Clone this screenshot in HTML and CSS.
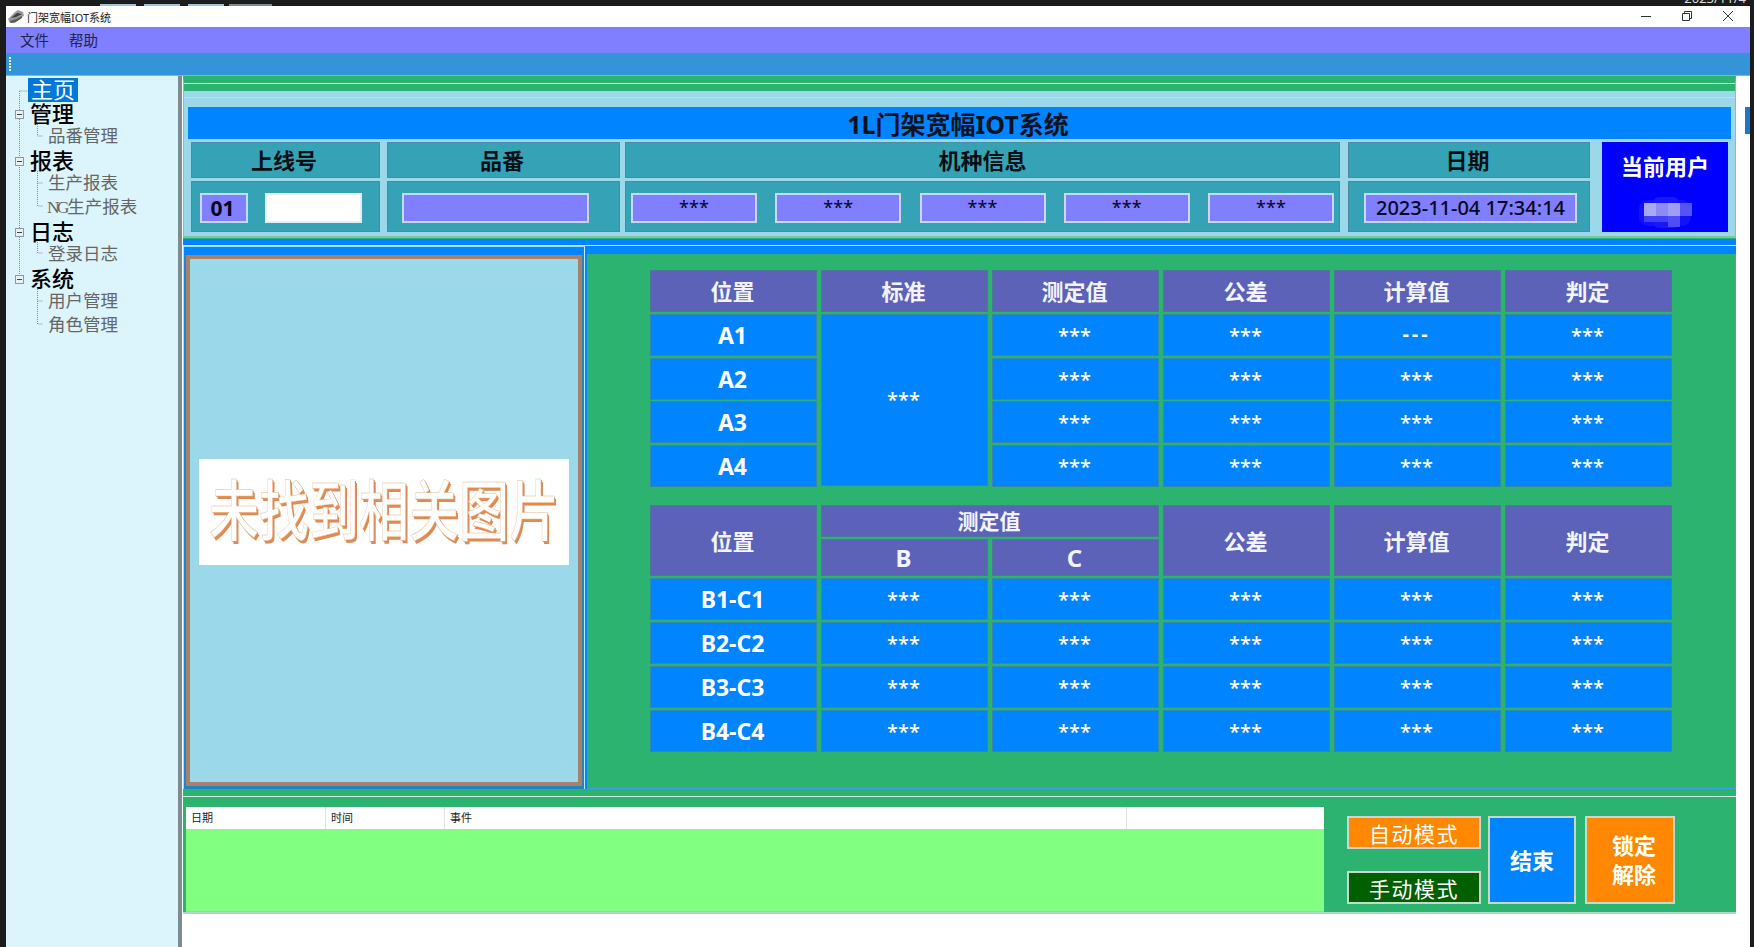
FILE: index.html
```html
<!DOCTYPE html>
<html lang="zh-CN">
<head>
  <meta charset="UTF-8">
  <title>门架宽幅IOT系统</title>
  <link rel="stylesheet" href="styles.css">
</head>
<body>
  <div class="taskbar">
    <span class="task-tab"></span>
    <span class="task-tab"></span>
    <span class="task-tab"></span>
    <span class="task-tab task-tab-active"></span>
    <span class="task-date">2023/11/4</span>
  </div>

  <div class="window">
    <div class="titlebar">
      <svg class="app-icon" width="16" height="14" viewBox="0 0 16 14">
        <path d="M0 9 L7 2 L10 0 L15 2 L16 6 L9 9 L7 13 L2 13 Z" fill="#9a9a9a"/>
        <path d="M3 8 L9 3 L14 4 L8 7 Z" fill="#3f3f3f"/>
        <path d="M2 11 L8 9 L14 6 L14 8 L8 12 L3 13 Z" fill="#5c5c5c"/>
      </svg>
      <span class="app-title">门架宽幅IOT系统</span>
      <div class="win-controls">
        <svg width="12" height="12" viewBox="0 0 12 12"><path d="M1 6.5 H11" stroke="#333" fill="none"/></svg>
        <svg width="12" height="12" viewBox="0 0 12 12"><path d="M1.5 3.5 H8.5 V10.5 H1.5 Z M3.5 3.5 V1.5 H10.5 V8.5 H8.5" stroke="#333" fill="none"/></svg>
        <svg width="12" height="12" viewBox="0 0 12 12"><path d="M1 1 L11 11 M11 1 L1 11" stroke="#333" fill="none"/></svg>
      </div>
    </div>

    <div class="menubar">
      <span>文件</span>
      <span>帮助</span>
    </div>

    <div class="toolbar"><span class="grip"></span></div>

    <div class="content">
      <aside class="sidebar">
        <svg class="tree-lines" width="60" height="340" viewBox="0 0 60 340">
          <g stroke="#888" stroke-dasharray="1 1" fill="none">
            <path d="M13.5 15 V204 M13.5 15 H22"/>
            <path d="M31.5 48 V60 H37"/>
            <path d="M31.5 95 V130 H37 M31.5 107 H37"/>
            <path d="M31.5 166 V177 H37"/>
            <path d="M31.5 213 V248 H37 M31.5 225 H37"/>
          </g>
          <g fill="#e8f2f5" stroke="#8a9aa0">
            <rect x="9.5" y="34.5" width="8" height="8"/>
            <rect x="9.5" y="81.5" width="8" height="8"/>
            <rect x="9.5" y="152.5" width="8" height="8"/>
            <rect x="9.5" y="199.5" width="8" height="8"/>
          </g>
          <g stroke="#444" fill="none">
            <path d="M11 38.5 H16 M11 85.5 H16 M11 156.5 H16 M11 203.5 H16"/>
          </g>
        </svg>
        <ul class="tree">
          <li class="node"><span class="node-selected">主页</span></li>
          <li class="node">管理</li>
          <li class="leaf">品番管理</li>
          <li class="node">报表</li>
          <li class="leaf">生产报表</li>
          <li class="leaf"><span class="leaf-latin">NG</span>生产报表</li>
          <li class="node">日志</li>
          <li class="leaf">登录日志</li>
          <li class="node">系统</li>
          <li class="leaf">用户管理</li>
          <li class="leaf">角色管理</li>
        </ul>
      </aside>
      <div class="splitter"></div>

      <main class="main">
        <div class="main-inner">
          <section class="info-panel">
            <div class="info-title">1L门架宽幅IOT系统</div>
            <div class="info-row">
              <div class="info-col col-line">
                <div class="info-head">上线号</div>
                <div class="info-body">
                  <span class="field field-line">01</span>
                  <span class="field field-white"></span>
                </div>
              </div>
              <div class="info-col col-part">
                <div class="info-head">品番</div>
                <div class="info-body body-center">
                  <span class="field field-part"></span>
                </div>
              </div>
              <div class="info-col col-model">
                <div class="info-head">机种信息</div>
                <div class="info-body body-model">
                  <span class="field field-model">***</span>
                  <span class="field field-model">***</span>
                  <span class="field field-model">***</span>
                  <span class="field field-model">***</span>
                  <span class="field field-model">***</span>
                </div>
              </div>
              <div class="info-col col-date">
                <div class="info-head">日期</div>
                <div class="info-body body-center">
                  <span class="field field-date">2023-11-04 17:34:14</span>
                </div>
              </div>
              <div class="user-box">
                <div class="user-label">当前用户</div>
                <svg class="user-blur" width="60" height="32" viewBox="0 0 60 32">
                  <rect x="6" y="3" width="52" height="26" rx="9" fill="#1212f8"/>
                  <rect x="20" y="0" width="26" height="31" rx="6" fill="#1818f7"/>
                  <rect x="11" y="6" width="12" height="13" fill="#aaa8f0"/>
                  <rect x="23" y="6" width="12" height="13" fill="#8d8bf0"/>
                  <rect x="35" y="6" width="12" height="13" fill="#a09ef2"/>
                  <rect x="47" y="6" width="12" height="13" fill="#5553f5"/>
                  <rect x="11" y="19" width="24" height="6" fill="#4040f6"/>
                  <rect x="35" y="19" width="12" height="11" fill="#4f4df5"/>
                </svg>
              </div>
            </div>
          </section>

          <section class="middle">
            <div class="photo-panel">
              <div class="photo-frame">
                <div class="no-image"><span class="no-image-text">未找到相关图片</span></div>
              </div>
            </div>
            <div class="data-panel">
              <div class="data-grid grid-a">
                <div class="cell cell-head">位置</div>
                <div class="cell cell-head">标准</div>
                <div class="cell cell-head">测定值</div>
                <div class="cell cell-head">公差</div>
                <div class="cell cell-head">计算值</div>
                <div class="cell cell-head">判定</div>

                <div class="cell cell-name">A1</div>
                <div class="cell cell-std">***</div>
                <div class="cell">***</div>
                <div class="cell">***</div>
                <div class="cell cell-dash">---</div>
                <div class="cell">***</div>

                <div class="cell cell-name">A2</div>
                <div class="cell">***</div>
                <div class="cell">***</div>
                <div class="cell">***</div>
                <div class="cell">***</div>

                <div class="cell cell-name">A3</div>
                <div class="cell">***</div>
                <div class="cell">***</div>
                <div class="cell">***</div>
                <div class="cell">***</div>

                <div class="cell cell-name">A4</div>
                <div class="cell">***</div>
                <div class="cell">***</div>
                <div class="cell">***</div>
                <div class="cell">***</div>
              </div>

              <div class="data-grid grid-b">
                <div class="cell cell-head span-rows">位置</div>
                <div class="cell cell-head span-cols head-small">测定值</div>
                <div class="cell cell-head span-rows">公差</div>
                <div class="cell cell-head span-rows">计算值</div>
                <div class="cell cell-head span-rows">判定</div>
                <div class="cell cell-head head-letter">B</div>
                <div class="cell cell-head head-letter">C</div>

                <div class="cell cell-name">B1-C1</div>
                <div class="cell">***</div>
                <div class="cell">***</div>
                <div class="cell">***</div>
                <div class="cell">***</div>
                <div class="cell">***</div>

                <div class="cell cell-name">B2-C2</div>
                <div class="cell">***</div>
                <div class="cell">***</div>
                <div class="cell">***</div>
                <div class="cell">***</div>
                <div class="cell">***</div>

                <div class="cell cell-name">B3-C3</div>
                <div class="cell">***</div>
                <div class="cell">***</div>
                <div class="cell">***</div>
                <div class="cell">***</div>
                <div class="cell">***</div>

                <div class="cell cell-name">B4-C4</div>
                <div class="cell">***</div>
                <div class="cell">***</div>
                <div class="cell">***</div>
                <div class="cell">***</div>
                <div class="cell">***</div>
              </div>
            </div>
          </section>

          <section class="bottom">
            <div class="log-table">
              <div class="log-head">
                <span class="log-date">日期</span>
                <span class="log-time">时间</span>
                <span class="log-event">事件</span>
                <span class="log-extra"></span>
              </div>
              <div class="log-body"></div>
            </div>
            <div class="mode-buttons">
              <button class="btn btn-auto">自动模式</button>
              <button class="btn btn-manual">手动模式</button>
            </div>
            <button class="btn btn-end">结束</button>
            <button class="btn btn-unlock">锁定<br>解除</button>
          </section>
        </div>
        <div class="side-tab"></div>
      </main>
    </div>
  </div>
</body>
</html>
```

FILE: styles.css
```css
html, body {
  margin: 0;
  height: 947px;
  overflow: hidden;
  background: #1c1c1c;
  font-family: "Noto Sans", "Noto Sans CJK SC", sans-serif;
}

.taskbar {
  height: 6px;
  display: flex;
  align-items: flex-end;
  padding-left: 100px;
  gap: 8px;
  overflow: hidden;
  position: relative;
}

.task-tab {
  width: 36px;
  height: 2px;
  background: #9fc4dc;
}

.task-tab-active {
  width: 43px;
  margin-left: -3px;
  background: #7d8a94;
}

.task-date {
  position: absolute;
  right: 8px;
  top: -11px;
  font-size: 13px;
  color: #ddd;
}

.window {
  margin-left: 6px;
  width: 1744px;
  height: 941px;
  background: #fff;
  display: flex;
  flex-direction: column;
}

.titlebar {
  height: 21px;
  display: flex;
  align-items: center;
  padding-left: 2px;
  background: #fff;
}

.app-icon {
  margin-right: 3px;
}

.app-title {
  font-size: 11px;
  color: #222;
}

.win-controls {
  margin-left: auto;
  display: flex;
  gap: 29px;
  padding-right: 16px;
  padding-bottom: 2px;
}

.win-controls svg {
  display: block;
}

.menubar {
  height: 26px;
  box-sizing: border-box;
  padding-bottom: 2px;
  background: #7f7fff;
  display: flex;
  align-items: center;
  gap: 20px;
  padding-left: 14px;
  font-size: 14.5px;
  color: #22224a;
}

.toolbar {
  height: 22px;
  background: #3494d8;
  border-bottom: 1px solid #7ab6dc;
  display: flex;
  align-items: center;
  padding-left: 3px;
}

.grip {
  width: 2px;
  height: 14px;
  background: repeating-linear-gradient(to bottom, #e8f4fb 0 2px, transparent 2px 3px);
}

.content {
  flex: 1;
  display: flex;
  min-height: 0;
}

/* left tree */
.sidebar {
  width: 172px;
  background: #dcf4fb;
  position: relative;
  padding-top: 2px;
}

.tree-lines {
  position: absolute;
  left: 0;
  top: 0;
}

.tree {
  list-style: none;
  margin: 0;
  padding: 0;
  position: relative;
}

.tree li {
  height: 23.6px;
  line-height: 23.6px;
  white-space: nowrap;
}

.node {
  padding-left: 24px;
  font-size: 22px;
  font-weight: 500;
  color: #000;
}

.node-selected {
  display: inline-block;
  vertical-align: top;
  background: #0078d7;
  color: #fff;
  font-weight: 400;
  height: 23.6px;
  padding: 0 3px;
  margin-left: -2px;
}

.leaf {
  padding-left: 42px;
  font-family: "Liberation Serif", "Noto Sans CJK SC", serif;
  font-size: 17.5px;
  color: #666;
}

.leaf-latin {
  letter-spacing: -3px;
  margin-right: 1px;
  margin-left: -1px;
}

.splitter {
  width: 4px;
  background: #7d8b92;
}

.main {
  flex: 1;
  display: flex;
  background: #fff;
  position: relative;
}

.main-inner {
  width: 1553px;
  margin-left: 1px;
  display: flex;
  flex-direction: column;
}

.side-tab {
  position: absolute;
  left: 1563px;
  top: 31px;
  width: 5px;
  height: 27px;
  background: #1976c8;
}

/* top info panel */
.info-panel {
  height: 162px;
  box-sizing: border-box;
  background: linear-gradient(to bottom, #2db370 0 8px, #9bd8e9 8px 14px, #b4e4f0 14px 15px, #9bd8e9 15px);
  border-top: 7px solid #2db370;
  border-left: 1px solid #7cc9a0;
  border-right: 1px solid #7cc9a0;
  border-bottom: 2px solid #7cc9a0;
  box-shadow: inset 0 1px 0 #cfeee0;
  padding: 24px 4px 0;
}

.info-title {
  height: 32px;
  background: #0084ff;
  text-align: center;
  font-size: 25px;
  font-weight: 700;
  line-height: 35px;
  padding-right: 3px;
  color: #0b1220;
}

.info-row {
  display: flex;
  margin-top: 3px;
  padding-left: 3px;
}

.info-col {
  display: flex;
  flex-direction: column;
  gap: 3px;
}

.col-line { width: 189px; }
.col-part { width: 233px; margin-left: 7px; }
.col-model { width: 715px; margin-left: 5px; }
.col-date { width: 242px; margin-left: 8px; }

.info-head {
  height: 36px;
  box-sizing: border-box;
  background: #35a3b5;
  border: 1px solid #4c8b99;
  text-align: center;
  font-size: 22px;
  font-weight: 700;
  line-height: 34px;
  color: #061014;
}

.col-line .info-head, .col-part .info-head, .col-date .info-head {
  padding-right: 3px;
}

.info-body {
  height: 51px;
  box-sizing: border-box;
  background: #35a3b5;
  border: 1px solid #4c8b99;
  padding-top: 3px;
  display: flex;
  align-items: center;
}

.body-center {
  justify-content: center;
}

.field {
  box-sizing: border-box;
  height: 30px;
  background: #7f7fff;
  border: 2px solid #c9d8f2;
  text-align: center;
  color: #08081c;
}

.field-line {
  width: 48px;
  margin-left: 8px;
  font-size: 21px;
  font-weight: 700;
  line-height: 26px;
  padding-right: 3px;
}

.field-white {
  width: 97px;
  margin-left: 17px;
  background: #fff;
  border-color: #e4eef2;
}

.field-part {
  width: 187px;
  margin-right: 16px;
}

.body-model {
  justify-content: space-between;
  padding-left: 5px;
  padding-right: 5px;
}

.field-model {
  width: 126px;
  font-size: 18px;
  line-height: 24px;
}

.field-date {
  width: 213px;
  margin-left: 3px;
  font-size: 20px;
  font-weight: 500;
  line-height: 26px;
}

.user-box {
  width: 126px;
  height: 90px;
  margin-left: 12px;
  background: #0000ff;
  color: #fff;
  text-align: center;
}

.user-label {
  font-size: 22px;
  font-weight: 700;
  line-height: 28px;
  padding-top: 10px;
}

.user-blur {
  display: block;
  margin: 17px 0 0 31px;
}

/* middle row */
.middle {
  height: 551px;
  display: flex;
  background: linear-gradient(to bottom, #0084ff 0 6px, #b8ecfa 6px 7px, #0084ff 7px);
  border-top: 1px solid #2db370;
  box-sizing: border-box;
}

.photo-panel {
  width: 402px;
  box-sizing: border-box;
  margin-top: 7px;
  padding: 8px 2px 3px 2px;
  border-left: 1px solid #9fe0f5;
  border-top: 1px solid #9fe0f5;
  border-right: 1px solid #b8ecfa;
  background: linear-gradient(to bottom, #0084ff 0 8px, #1f86c4 8px);
  display: flex;
}

.photo-frame {
  flex: 1;
  box-sizing: border-box;
  background: #9bd8e9;
  border: 4px solid #a9806a;
  display: flex;
  align-items: center;
  padding: 0 9px;
}

.no-image {
  flex: 1;
  height: 106px;
  margin-bottom: 18px;
  background: #fff;
  text-align: center;
  font-size: 50px;
  line-height: 102px;
  white-space: nowrap;
}

.no-image-text {
  display: inline-block;
  transform: scaleY(1.32);
  font-weight: 500;
  color: #fff;
  -webkit-text-stroke: 0.3px #e9b58f;
  text-shadow: 1px 1px 0 #e18a52, 2px 2px 0 #e18a52;
}

.data-panel {
  flex: 1;
  margin-top: 15px;
  margin-left: 2px;
  background: #2db370;
  border-right: 1px solid #3aa0e8;
  border-bottom: 1px solid #3aa0e8;
  box-sizing: border-box;
  padding: 16px 0 0 63px;
}

.data-grid {
  display: grid;
  grid-template-columns: repeat(6, 167px);
  column-gap: 4px;
}

.grid-a {
  grid-template-rows: 42px repeat(4, 42px);
  row-gap: 1.75px;
}

.grid-b {
  margin-top: 18px;
  grid-template-rows: 32px 37px repeat(4, 42px);
  row-gap: 2px;
}

.cell {
  box-sizing: border-box;
  background: #0084ff;
  border: 1px solid #3a86a8;
  padding-right: 2px;
  color: #fff;
  text-align: center;
  font-size: 20px;
  line-height: 41px;
  font-weight: 500;
}

.cell-head {
  background: #5b62b8;
  border-color: #4b7a98;
  font-size: 22px;
  font-weight: 700;
  line-height: 40px;
  color: #f2f4ff;
}

.head-small {
  line-height: 31px;
  font-size: 21px;
}

.head-letter {
  font-size: 24px;
  line-height: 36px;
}

.cell-name {
  font-size: 23px;
  font-weight: 700;
  line-height: 40px;
}

.cell-dash {
  line-height: 38px;
  font-weight: 700;
  letter-spacing: 3px;
}

.cell-std {
  grid-row: span 4;
  height: 172px;
  line-height: 28px;
  display: flex;
  align-items: center;
  justify-content: center;
}

.span-rows {
  grid-row: span 2;
  display: flex;
  align-items: center;
  justify-content: center;
}

.span-cols {
  grid-column: span 2;
}

/* bottom row */
.bottom {
  flex: 1;
  max-height: 125px;
  box-sizing: border-box;
  background: #2db370;
  border-top: 7px solid #2db370;
  border-bottom: 2px solid #a7dcc0;
  box-shadow: inset 0 1px 0 #cfeee0;
  display: flex;
  padding-top: 11px;
  padding-left: 3px;
}

.log-table {
  width: 1138px;
  height: 104px;
  flex-shrink: 0;
  display: flex;
  flex-direction: column;
  border-bottom: 1px solid #8fd6a8;
}

.log-head {
  height: 22px;
  background: #fff;
  display: flex;
  align-items: center;
  font-size: 11px;
  color: #222;
}

.log-head span {
  box-sizing: border-box;
  height: 22px;
  line-height: 22px;
  padding-left: 5px;
  border-right: 1px solid #e2e2e2;
}

.log-date { width: 140px; }
.log-time { width: 119px; }
.log-event { width: 682px; }
.log-extra { flex: 1; border-right: 0 !important; }

.log-body {
  flex: 1;
  background: #80ff80;
}

.mode-buttons {
  margin: 9px 0 0 23px;
  width: 134px;
  display: flex;
  flex-direction: column;
  gap: 22px;
}

.btn {
  box-sizing: border-box;
  border: 2px solid #c8d8d0;
  color: #fff;
  font-family: inherit;
  padding: 0;
}

.btn-auto, .btn-manual {
  height: 33px;
  font-size: 21px;
  letter-spacing: 1.5px;
  padding-bottom: 6px;
}

.btn-auto {
  background: #ff8800;
}

.btn-manual {
  background: #006000;
}

.btn-end, .btn-unlock {
  height: 88px;
  margin-top: 9px;
  font-size: 22px;
  font-weight: 700;
  line-height: 29px;
}

.btn-end {
  width: 88px;
  margin-left: 7px;
  background: #0084ff;
}

.btn-unlock {
  width: 90px;
  margin-left: 9px;
  padding-left: 8px;
  background: #ff8800;
}
```
